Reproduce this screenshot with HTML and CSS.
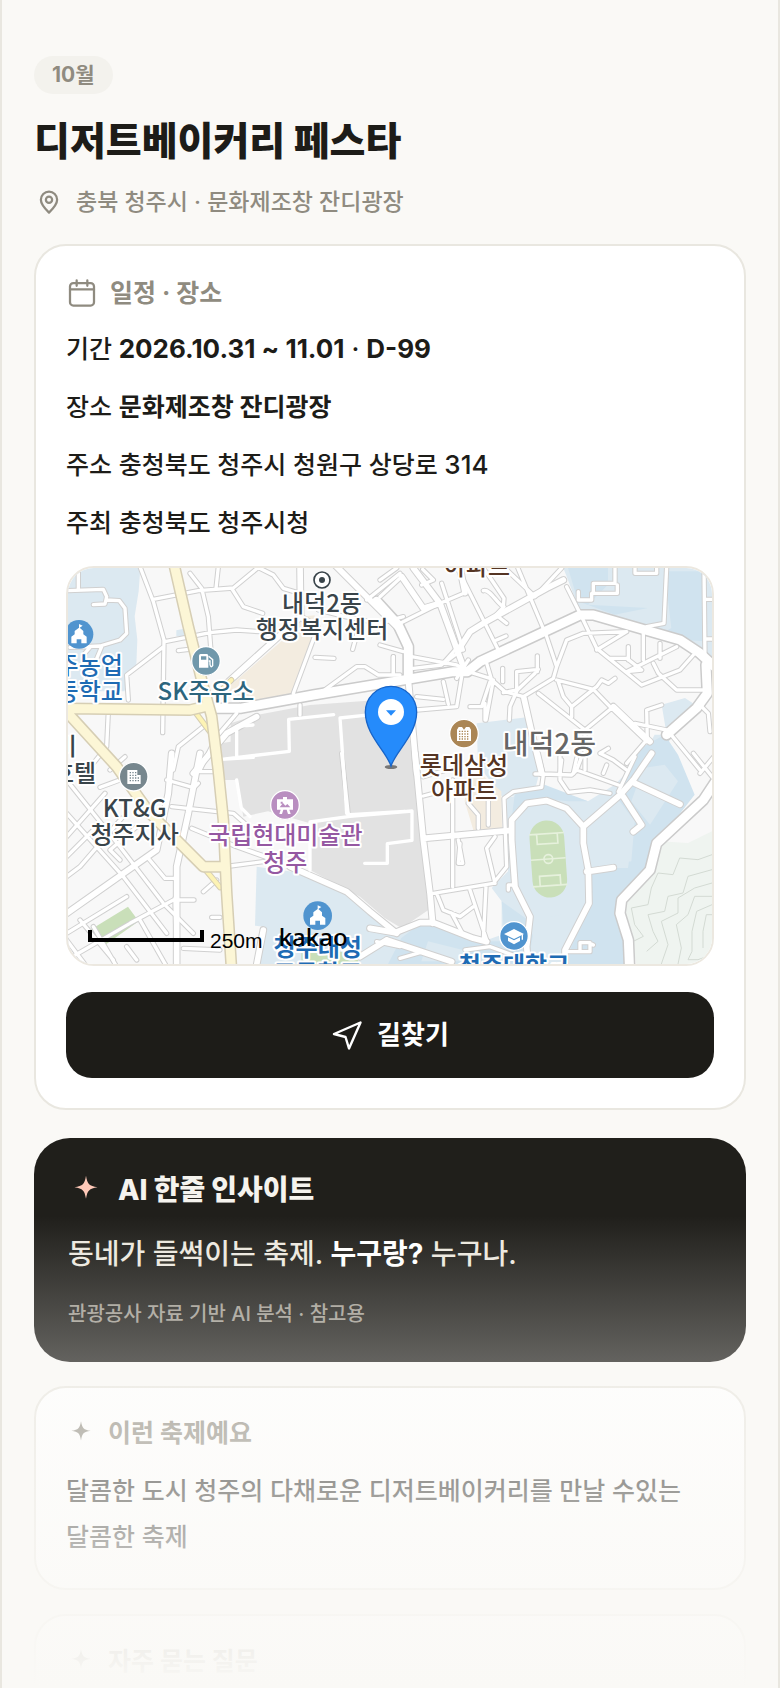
FILE: index.html
```html
<!DOCTYPE html>
<html lang="ko">
<head>
<meta charset="utf-8">
<meta name="viewport" content="width=device-width, initial-scale=1">
<title>디저트베이커리 페스타</title>
<link rel="stylesheet" href="styles.css">
</head>
<body>
<main class="page">
  <header class="hero">
    <span class="month">10월</span>
    <h1 class="title">디저트베이커리 페스타</h1>
    <p class="place">
      <svg class="icon-pin" viewBox="0 0 24 24" aria-hidden="true"><path d="M12 20.5C8.600 17.200 5.500 14 5.500 10.200a6.500 6.500 0 0 1 13 0C18.500 14 15.400 17.200 12 20.500Z"/><circle cx="12" cy="10.200" r="2.500"/></svg>
      <span>충북 청주시 · 문화제조창 잔디광장</span>
    </p>
  </header>

  <section class="card">
    <h2 class="card-head">
      <svg class="icon-calendar" viewBox="0 0 24 24" aria-hidden="true"><rect x="3" y="4.600" width="18" height="16.800" rx="2.500"/><path d="M3 9.200h18M8 2.600v4M16 2.600v4"/></svg>
      <span>일정 · 장소</span>
    </h2>
    <div class="rows">
      <p>기간 <span class="num"><b>2026.10.31 ~ 11.01</b> · <b>D-99</b></span></p>
      <p>장소 <b>문화제조창 잔디광장</b></p>
      <p>주소 충청북도 청주시 청원구 상당로 <span class="num">314</span></p>
      <p>주최 충청북도 청주시청</p>
    </div>

    <div class="map">
      <svg viewBox="0 0 1932 1188" preserveAspectRatio="xMidYMid slice" role="img" aria-label="지도">
        <defs>
          <g id="minor">
            <g transform="translate(-24 -24)">
              <path d="M55 20V90M20 92L130 88L140 110L135 132L100 134M140 120L178 122L195 145L200 220L180 240L120 258L30 262M125 260L100 320M90 262L70 285M240 20L280 125L312 240L308 518M280 118L415 92L520 84L600 18M475 20L468 85M390 40L425 85L445 170L455 300M515 85L550 140L608 160M590 20L640 45L670 85L720 100M315 245L450 218L530 210L600 215M355 272L405 266M308 262L200 345L205 420M775 150L855 170L960 190L1030 170M890 225L878 268M765 292L822 295M765 225L700 400M780 400L890 320L915 320L955 345L1020 345M1000 290V345M920 120L1020 40M720 435V465M145 455L140 560L100 610M195 590L150 630M430 500L355 560L340 630M530 460L470 530L420 630"/>
            </g>
            <g transform="translate(936 -24)">
              <path d="M0 110L60 55M0 60L50 24M50 195L180 130L255 98M128 28L160 60L125 75M230 20L355 270M185 70L250 270M310 92C330 85 350 130 370 140L372 115L335 60L310 24M372 140L348 165L380 190M370 20L465 110L545 24M412 20L500 230L530 320M560 80L600 160L650 265L785 375M705 20V70H640V100H712V75M595 95V120H635V100M765 24V40H830V24M860 20L852 190L800 200M972 20L975 300M975 118H1020M975 237H1020M0 255L70 275M40 290V340M95 290L230 315L262 335M100 325L185 315L225 270M350 240L378 228M245 270L205 300M230 355L265 300M410 335V390L370 398M410 335L475 328M472 288V335M465 340L412 390L390 440L388 480M368 325V365M265 335L330 355L375 395L430 410L520 355M340 360L318 480M330 365L305 440L270 440M245 350L230 440L110 450M110 410L190 418M190 365L205 432M320 310L335 360M520 355L530 320L560 240L610 220L740 215M530 360L640 388L690 440L800 545M535 365L550 410L575 440L650 380L665 360L685 370L705 355M575 440V470M475 400L615 510L700 440M615 510V630M745 260V300M790 215V300M840 250V295M650 270L740 215M690 295L740 295L785 330L740 335M740 335L890 260M820 310L835 340M785 375L900 330L940 285M835 340L890 390L970 390M845 435L800 450L802 545M765 490L860 510M800 540L740 610M660 580L700 600L740 630M685 565L660 580M545 600L540 640M590 595L580 640M870 520L960 630M960 435L985 460L990 515M315 430V480"/>
            </g>
            <g transform="translate(-24 576)">
              <path d="M20 60L180 260L310 430L400 520M20 160L190 350L320 520M120 82L185 58M135 100L20 230M185 175L60 320L20 350M100 210L20 290M230 200L150 270L180 300M265 295L315 355H345M20 520L200 410M20 600L210 490L340 420H402M60 480L160 600M20 540L80 620M230 600L200 560M345 415L350 620M100 500L170 620M240 480L320 620M320 60L390 80M420 35H460M415 70L395 90M335 140L520 160L560 195M395 205L530 260L620 290M510 318L610 305M530 260L640 300M370 565L480 570M455 472H480M430 395L470 360M845 -20L865 165"/>
            </g>
            <g transform="translate(936 576)">
              <path d="M465 42H485M475 -20L490 45L485 82L400 95L372 115L380 320L340 370L160 400M490 42L575 45L590 30L715 75M590 30L605 -10M540 -10V60L565 97L630 90L690 100M670 40L680 15M715 95L765 -10M130 108L160 100M130 50L200 30M218 60V380M265 130L295 165V205M325 120V195M235 240L248 310H235L240 250M345 230L320 265L345 370M318 380L310 540M270 390L320 540M170 400L190 450L240 470L280 440M215 460L250 525M255 570L330 560L440 600M60 595L130 575M400 375H385V390M555 575H630V548H600V575M640 555L630 550M940 -20L1020 80M1010 -20L960 40M-10 545L60 560"/>
            </g>
          </g>
          <g id="street">
            <g transform="translate(936 -24)">
              <path d="M65 50L130 145L180 130L100 24M180 130L250 320M255 98L240 24M235 270L270 215L310 190L500 85L550 60"/>
              <path d="M85 360L110 640M432 415L465 560L485 640M700 440L810 545"/>
            </g>
            <g transform="translate(-24 -24)">
              <path d="M720 10L722 170M722 170L500 370M720 170L770 200M820 10L1020 210M590 470L500 520L400 640"/>
            </g>
            <g transform="translate(-24 576)">
              <path d="M335 -20L325 100L290 270L20 460M420 -20L385 160L350 320V640M610 510L585 640M690 320L860 395L930 455L1010 520"/>
            </g>
            <g transform="translate(936 576)">
              <path d="M105 -20L130 240L150 400L158 490M-30 505L45 518L120 488H160L280 535L320 545M130 235L385 212M610 200L720 105L760 60L815 -20M765 70L900 133M730 110L785 195L760 215M395 240V180L440 130L500 122L560 145L610 200V250L625 330L627 430L555 570V640M395 240L405 380L450 470L440 560L445 620M620 335L700 323M20 540L215 605M-60 590L20 540"/>
            </g>
          </g>
          <g id="avenue">
            <path d="M436 421H516L736 381L1156 311H1198L1236 281L1536 141H1576L1836 216L1896 256L1956 311"/>
            <path d="M1914 290L1918 376L1886 420L1796 500"/>
            <path d="M1956 620L1906 696L1766 826L1746 906L1661 996L1656 1036L1681 1116L1685 1210"/>
            <path d="M1021 321V236L990 170L926 100"/>
          </g>
          <g id="trunk">
            <path d="M316 -20L361 176L406 356L431 446L450 600L466 756L476 976L491 1210"/>
            <path d="M-10 421L366 426L411 416M-10 425L146 596L246 736L406 896H466"/>
          </g>
          <g id="school">
            <circle r="43"/>
            <path class="glyph" d="M-23 27V7L-13 0V-10L0 -20V-31L11 -26L2 -20L13 -10V0L23 7V27H7V15H-7V27Z"/>
          </g>
        </defs>

        <rect class="land" width="1932" height="1188"/>
        <path class="campus" d="M0 0H217L212 70L200 145L208 215L205 290L176 320L170 370H0ZM325 187L348 182V205H325ZM1486 0H1932V280L1836 216L1536 130ZM1226 466L1376 448L1420 590L1400 670L1305 690L1230 590ZM1781 410L1851 390L1896 420L1796 500Z"/>
        <path class="campus" d="M566 896L706 916L870 990L976 1090L1050 1064L1246 1120L1301 1100V1000L1271 960L1320 910L1316 690L1440 660L1560 700L1640 650L1720 570L1760 500L1806 500L1796 576L1870 690L1766 826L1746 906L1661 996L1680 1188H575L590 1076L561 1073Z"/>
        <path class="campus-deep" d="M1500 0H1620V50L1560 110L1740 120L1640 140L1530 100ZM1790 10H1910V220L1760 210L1810 180ZM1700 550L1790 500L1830 560L1880 680L1766 826L1740 910L1661 996L1680 1188H1490L1560 1010L1550 900L1680 900L1700 760L1640 680ZM1340 680L1430 650L1560 700L1500 700L1400 690L1330 760ZM1301 1000L1400 1070L1380 1188H960L1000 1110L1060 1064L1250 1120L1310 1120Z"/>
        <path class="campus" d="M1570 790L1660 730L1700 760L1690 880L1560 900ZM1726 600L1790 590L1830 640L1746 770L1690 700ZM1380 1060L1480 1040V1150L1400 1120ZM1080 1120L1200 1150V1180H1060Z"/>
        <path class="ground" d="M695 146L740 142L741 196L676 381L566 396L466 371L640 220ZM1205 590L1300 670L1302 780L1216 786L1190 700Z"/>
        <path class="block" d="M458 526L488 521V466L566 441L726 411L1010 390L1036 606L1081 1026L1001 1081L950 1050L876 986L726 906V766L600 730L526 746L506 636H466Z"/>
        <path class="hill" d="M1776 820L1860 825L1932 790V1188H1705L1690 1110L1665 1020L1750 910Z"/>
        <path class="contour" d="M1932 860L1890 875L1835 870L1815 920L1770 915L1750 960L1740 1010L1690 1020L1700 1070L1726 1105L1696 1120M1932 905L1860 925L1845 975L1800 985L1790 1030L1740 1040L1755 1090L1770 1120L1736 1150M1932 945L1880 960L1830 990L1830 1035L1780 1060L1800 1130L1780 1188M1932 985H1880L1860 1040L1825 1070L1840 1140L1830 1188"/>
        <path class="contour" d="M1932 1010L1886 1030L1872 1090V1150L1860 1175H1890L1932 1160M1932 1040H1915L1905 1090V1140"/>
        <path class="park" d="M60 1090L180 1016L212 1060L110 1132ZM700 1155L780 1145L870 1160V1188H700Z"/>

        <g class="pitch" transform="translate(1441 873) rotate(-4)">
          <rect class="park" x="-52" y="-116" width="104" height="232" rx="52"/>
          <path d="M-52 -76H52M-52 0H52M-52 80H52M-30 -76V-46H32V-76M-30 80V50H32V80"/>
          <circle r="13"/>
        </g>

        <use href="#minor" class="road minor edge"/>
        <use href="#street" class="road street edge"/>
        <use href="#avenue" class="road avenue edge"/>
        <use href="#minor" class="road minor"/>
        <use href="#street" class="road street"/>
        <use href="#avenue" class="road avenue"/>
        <path class="lane" d="M555 471L506 475V570M556 568L460 574L664 550L662 454L797 440M910 440L816 450L836 736L846 740L1010 730M506 636L520 720L546 746M726 906V762L846 745L1032 729V817L958 827V886H890"/>
        <path class="ramp edge" d="M380 430L425 490M408 900L456 958M466 360L490 336"/>
        <path class="ramp" d="M380 430L425 490M408 900L456 958M466 360L490 336"/>
        <use href="#trunk" class="road trunk edge"/>
        <use href="#trunk" class="road trunk"/>

        <g class="poi">
          <use href="#school" class="blue" x="33" y="199"/>
          <use href="#school" class="blue" x="749" y="1043"/>
          <g class="teal" transform="translate(414 279)"><circle r="43"/><path class="glyph" d="M-21 20V-16Q-21 -21 -16 -21H2Q7 -21 7 -16V20Z"/><path class="hole" d="M-15 -14H1V-4H-15Z"/><path class="hose" d="M8 -14L20 -4V14Q14 22 12 10V0H8"/></g>
          <g class="slate" transform="translate(197 626)"><circle r="43"/><path class="glyph" d="M-19 22V-20H11V-5H21V22Z"/><path class="dots" d="M-12 -12H8M-12 -4H8M-12 4H16M-12 12H16"/></g>
          <g class="violet" transform="translate(651 711)"><circle r="43"/><path class="glyph" d="M-24 -17H-6V-24H6V-17H24V14H13L17 27H9L5 14H-5L-9 27H-17L-13 14H-24Z"/><path class="hole" d="M-16 7L-6 -6L1 2L7 -3L16 7ZM-13 -10h6v6h-6z"/></g>
          <g class="brown" transform="translate(1188 497)"><circle r="43"/><path class="glyph" d="M-21 22V-12L-16 -20H-6L0 -12L6 -20H16L21 -12V22Z"/><path class="dots" d="M-15 -7H16M-15 1H16M-15 9H16M-15 16H16"/></g>
          <g class="blue" transform="translate(1338 1104)"><circle r="43"/><path class="glyph" d="M0 -21L30 -6L0 9L-30 -6ZM-18 4L0 13L18 4V15L0 25L-18 15Z"/><path class="tassel" d="M25 -5V11"/></g>
        </g>
        <g class="target"><circle cx="762" cy="36" r="24"/><circle class="dot" cx="762" cy="36" r="9"/></g>

        <g class="label">
          <text x="762" y="133">내덕2동</text>
          <text x="762" y="211">행정복지센터</text>
          <text class="t-teal" x="414" y="396">SK주유소</text>
          <text class="t-blue" x="32" y="318">청주농업</text>
          <text class="t-blue" x="32" y="396">고등학교</text>
          <text x="-40" y="562">서비</text>
          <text x="18" y="642">호텔</text>
          <text x="200" y="748">KT&amp;G</text>
          <text x="200" y="826">청주지사</text>
          <text class="t-violet" x="652" y="829">국립현대미술관</text>
          <text class="t-violet" x="652" y="908">청주</text>
          <text class="t-brown" x="1227" y="21">아파트</text>
          <text class="t-brown" x="1188" y="617">롯데삼성</text>
          <text class="t-brown" x="1188" y="694">아파트</text>
          <text class="t-area" x="1444" y="557">내덕2동</text>
          <text class="t-blue strong" x="749" y="1163">청주대성</text>
          <text class="t-blue strong" x="749" y="1241">고등학교</text>
          <text class="t-blue strong" x="1338" y="1219">청주대학교</text>
        </g>

        <ellipse class="shadow" cx="969" cy="597" rx="19" ry="6"/>
        <path class="marker" d="M969 594C955 550 892 500 892 432a77 77 0 0 1 154 0C1046 500 983 550 969 594Z"/>
        <circle class="marker-eye" cx="969" cy="432" r="39"/>
        <path class="marker-arrow" d="M954 427H984L969 443Z"/>

        <path class="scale" d="M66 1086V1116H402V1086"/>
        <text class="scale-text" x="426" y="1139">250m</text>
        <text class="brand" x="632" y="1133">kakao</text>
      </svg>
    </div>

    <button class="route" type="button">
      <svg class="icon-nav" viewBox="0 0 32 32" aria-hidden="true"><path d="M3 15L29.500 3.500L18 29.500L14.500 18Z"/></svg>
      <span>길찾기</span>
    </button>
  </section>

  <section class="insight">
    <h2 class="insight-head">
      <svg class="spark" viewBox="0 0 24 24" aria-hidden="true"><path d="M12 2.500C13 8.200 14 9.200 19.700 10.200C14 11.200 13 12.200 12 17.900C11 12.200 10 11.200 4.300 10.200C10 9.200 11 8.200 12 2.500Z"/></svg>
      <span>AI 한줄 인사이트</span>
    </h2>
    <p class="insight-body">동네가 들썩이는 축제. <b>누구랑?</b> 누구나.</p>
    <p class="insight-note">관광공사 자료 기반 AI 분석 · 참고용</p>
  </section>

  <section class="card brief">
    <h2 class="card-head">
      <svg class="spark" viewBox="0 0 24 24" aria-hidden="true"><path d="M12 2.500C13 8.200 14 9.200 19.700 10.200C14 11.200 13 12.200 12 17.900C11 12.200 10 11.200 4.300 10.200C10 9.200 11 8.200 12 2.500Z"/></svg>
      <span>이런 축제예요</span>
    </h2>
    <p>달콤한 도시 청주의 다채로운 디저트베이커리를 만날 수있는 달콤한 축제</p>
  </section>

  <section class="card brief">
    <h2 class="card-head">
      <svg class="spark" viewBox="0 0 24 24" aria-hidden="true"><path d="M12 2.500C13 8.200 14 9.200 19.700 10.200C14 11.200 13 12.200 12 17.900C11 12.200 10 11.200 4.300 10.200C10 9.200 11 8.200 12 2.500Z"/></svg>
      <span>자주 묻는 질문</span>
    </h2>
  </section>
  <div class="fade"></div>
</main>
</body>
</html>
```
FILE: styles.css
```css
:root {
  --ink: #1d1c18;
  --muted: #8f8b80;
  --line: #e9e7e0;
  --paper: #faf9f6;
}

* {
  box-sizing: border-box;
}

body,
h1,
h2,
p {
  margin: 0;
}

body {
  background: var(--paper);
  color: var(--ink);
  font-family: Inter, "Noto Sans CJK KR", sans-serif;
  font-size: 25px;
  font-weight: 500;
  line-height: 46px;
  word-break: keep-all;
}

b {
  font-weight: 700;
}

.page {
  position: relative;
  display: flex;
  flex-direction: column;
  height: 100vh;
  overflow: hidden;
  padding: 56px 32px 0;
  border: solid var(--line);
  border-width: 0 2px;
}

.page > * {
  flex-shrink: 0;
}

.hero {
  display: flex;
  flex-direction: column;
  align-items: flex-start;
  margin-bottom: 24px;
}

.month {
  padding: 0 18px;
  border-radius: 19px;
  background: #f3f2ed;
  color: var(--muted);
  font-size: 21px;
  font-weight: 700;
  line-height: 38px;
}

.title {
  margin-top: 20px;
  font-size: 39px;
  font-weight: 800;
  line-height: 54px;
}

.place {
  display: flex;
  align-items: center;
  gap: 12px;
  margin-top: 16px;
  color: var(--muted);
  font-size: 23px;
  line-height: 36px;
}

.icon-pin,
.icon-calendar,
.icon-nav {
  flex: none;
  fill: none;
  stroke: currentColor;
  stroke-linecap: round;
  stroke-linejoin: round;
}

.icon-pin {
  width: 30px;
  height: 30px;
  stroke-width: 1.8;
}

.icon-calendar {
  width: 32px;
  height: 32px;
  stroke-width: 1.7;
}

.icon-nav {
  width: 32px;
  height: 32px;
  stroke-width: 2.4;
}

.card {
  padding: 30px;
  border: 2px solid var(--line);
  border-radius: 32px;
  background: #fff;
}

.card-head {
  display: flex;
  align-items: center;
  gap: 12px;
  margin-bottom: 16px;
  color: var(--muted);
  font-size: 25px;
  font-weight: 700;
  line-height: 34px;
}

.brief {
  padding-bottom: 28px;
}

.brief .card-head {
  margin-bottom: 20px;
  line-height: 30px;
}

.spark {
  flex: none;
  width: 30px;
  height: 30px;
  fill: currentColor;
}

.rows {
  display: grid;
  gap: 12px;
}

.rows p {
  height: 46px;
}

.num {
  font-size: 26px;
}

.map {
  height: 400px;
  margin: 20px 0 26px;
  overflow: hidden;
  border: 2px solid #ece8e0;
  border-radius: 28px;
}

.map svg {
  display: block;
  width: 100%;
  height: 100%;
}

.route {
  display: flex;
  align-items: center;
  justify-content: center;
  gap: 14px;
  width: 100%;
  height: 86px;
  border: 0;
  border-radius: 26px;
  background: var(--ink);
  color: #fff;
  font: inherit;
  font-size: 26px;
  font-weight: 700;
}

.insight {
  margin: 28px 0 24px;
  padding: 34px;
  border-radius: 36px;
  background: #201f1b;
  color: #ece8df;
}

.insight-head {
  display: flex;
  align-items: center;
  gap: 14px;
  color: #f5f3ee;
  font-size: 28px;
  font-weight: 800;
  line-height: 36px;
}

.insight-head .spark {
  width: 36px;
  height: 36px;
  color: #ffc9b8;
}

.insight-body {
  margin: 22px 0;
  font-size: 28px;
  line-height: 48px;
}

.insight-body b {
  color: #fff;
}

.insight-note {
  color: #a09c92;
  font-size: 20px;
  line-height: 28px;
}

.card + .card {
  margin-top: 24px;
}

.fade {
  position: absolute;
  inset: auto -2px 0;
  height: 472px;
  background: linear-gradient(rgba(250, 249, 246, 0), var(--paper));
  pointer-events: none;
}

/* Map drawing */
.land { fill: #f8f8f8; }
.campus { fill: #dce9f1; }
.campus-deep { fill: #d0e3ef; }
.ground { fill: #f3ece0; }
.block { fill: #e2e2e2; }
.hill { fill: #eff4f0; }
.park { fill: #c9dfb9; }
.contour { fill: none; stroke: #d3dad3; stroke-width: 3; }
.pitch path,
.pitch circle { fill: none; stroke: #e6f1dc; stroke-width: 5; }

.road,
.ramp,
.lane {
  fill: none;
  stroke: #fff;
  stroke-linecap: round;
  stroke-linejoin: round;
}

.lane { stroke-width: 10; }
.minor { stroke-width: 10; }
.minor.edge { stroke: #d0d0d0; stroke-width: 16; }
.street { stroke-width: 17; }
.street.edge { stroke: #d0d0d0; stroke-width: 23; }
.avenue { stroke-width: 27; }
.avenue.edge { stroke: #cbcbcb; stroke-width: 36; }
.trunk { stroke: #fcf6d6; stroke-width: 27; }
.trunk.edge { stroke: #d6ceb4; stroke-width: 36; }
.ramp { stroke: #fdf3b4; stroke-width: 12; }
.ramp.edge { stroke: #d6ceb4; stroke-width: 18; }

.poi circle { stroke: #fff; stroke-width: 4; }
.blue { fill: #5094cf; }
.teal { fill: #7098ab; }
.slate { fill: #77878e; }
.violet { fill: #b98ec0; }
.brown { fill: #ab8655; }
.glyph { fill: #fff; }
.hose,
.tassel { fill: none; stroke: #fff; stroke-width: 4; }
.dots { fill: none; stroke: #77878e; stroke-width: 4; stroke-dasharray: 4 4; }
.brown .dots { stroke: #ab8655; }

.target circle { fill: #fff; stroke: #39444a; stroke-width: 5; }
.target .dot { fill: #39444a; stroke: none; }

.label {
  fill: #39444a;
  stroke: #fff;
  stroke-width: 12;
  stroke-linejoin: round;
  paint-order: stroke;
  font-family: "Noto Sans CJK KR", sans-serif;
  font-size: 72px;
  font-weight: 500;
  text-anchor: middle;
}

.t-blue { fill: #1e6bb4; }
.t-teal { fill: #2c657d; }
.t-violet { fill: #9558a2; }
.t-brown { fill: #553524; }
.t-area { fill: #666; font-size: 84px; }
.strong { font-weight: 700; }

.shadow { fill: #777; }
.marker { fill: #258bfb; stroke: #1764c8; stroke-width: 4; }
.marker-eye { fill: #fff; }
.marker-arrow { fill: #258bfb; }
.scale { fill: none; stroke: #000; stroke-width: 12; }
.scale-text { font-family: "Liberation Sans", sans-serif; font-size: 63px; }
.brand { font-family: "Noto Sans", sans-serif; font-size: 72px; font-weight: 500; }
```
